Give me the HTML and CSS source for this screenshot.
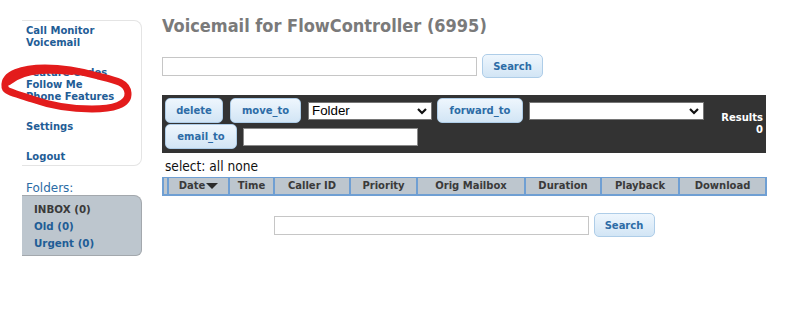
FILE: index.html
```html
<!DOCTYPE html>
<html>
<head>
<meta charset="utf-8">
<link rel="stylesheet" href="styles.css">
</head>
<body>
<div class="page">
  <aside class="sidebar">
    <nav class="menu">
      <div class="menu-group"><a class="menu-link">Call Monitor</a><a class="menu-link">Voicemail</a></div>
      <div class="menu-group"><a class="menu-link">Feature Codes</a><a class="menu-link">Follow Me</a><a class="menu-link">Phone Features</a></div>
      <div class="menu-group"><a class="menu-link">Settings</a></div>
      <div class="menu-group"><a class="menu-link">Logout</a></div>
    </nav>
    <div class="folders-label">Folders:</div>
    <div class="folders">
      <a class="folder current">INBOX (0)</a>
      <a class="folder">Old (0)</a>
      <a class="folder">Urgent (0)</a>
    </div>
  </aside>
  <main class="main">
    <h1 class="title">Voicemail for FlowController (6995)</h1>
    <div class="search-row">
      <input class="search-input" type="text"><button class="btn btn-search">Search</button>
    </div>
    <div class="toolbar">
      <div class="toolbar-controls">
        <div class="tb-row">
          <button class="btn btn-tb btn-delete">delete</button>
          <button class="btn btn-tb btn-move">move_to</button>
          <span class="select-wrap sel-folder">
            <select class="select"><option>Folder</option></select>
            <svg class="chev" width="10" height="7" viewBox="0 0 10 7"><polyline points="1,1 5,5 9,1" fill="none" stroke="#111" stroke-width="2.2"/></svg>
          </span>
          <button class="btn btn-tb btn-forward">forward_to</button>
          <span class="select-wrap sel-forward">
            <select class="select"><option></option></select>
            <svg class="chev" width="10" height="7" viewBox="0 0 10 7"><polyline points="1,1 5,5 9,1" fill="none" stroke="#111" stroke-width="2.2"/></svg>
          </span>
        </div>
        <div class="tb-row tb-row2">
          <button class="btn btn-tb btn-email">email_to</button>
          <input class="email-input" type="text">
        </div>
      </div>
      <div class="results">Results<br>0</div>
    </div>
    <div class="select-links">select: <a class="sel-link">all</a> <a class="sel-link">none</a></div>
    <table class="msg-table">
      <thead>
        <tr>
          <th class="c-check"></th>
          <th class="c-date">Date<svg class="sort" width="12" height="7" viewBox="0 0 12 7"><polygon points="0,0 12,0 6,6" fill="#2b2b2b"/></svg></th>
          <th class="c-time">Time</th>
          <th class="c-caller">Caller ID</th>
          <th class="c-prio">Priority</th>
          <th class="c-orig">Orig Mailbox</th>
          <th class="c-dur">Duration</th>
          <th class="c-play">Playback</th>
          <th class="c-down">Download</th>
        </tr>
      </thead>
    </table>
    <div class="search-row search-bottom">
      <input class="search-input" type="text"><button class="btn btn-search">Search</button>
    </div>
  </main>
  <svg class="scribble" width="140" height="120" viewBox="0 0 140 120">
    <path d="M 5 86 C 4 74, 22 68, 45 68 C 65 68, 80 71, 98 76 C 115 80, 127 82, 128 93 C 129 105, 112 109, 92 109 C 66 109, 46 104, 32 99 C 18 94, 4 92, 5 86" fill="none" stroke="#e31c1c" stroke-width="7" stroke-linecap="round" stroke-linejoin="round"/>
    <path d="M 9 82 C 16 76, 28 72, 40 71 C 52 70, 62 71, 72 72" fill="none" stroke="#e31c1c" stroke-width="6" stroke-linecap="round"/>
  </svg>
</div>
</body>
</html>
```

FILE: styles.css
```css
html, body {
  margin: 0;
  padding: 0;
  background: #ffffff;
}
.page {
  position: relative;
  display: flex;
  align-items: flex-start;
  font-family: "DejaVu Sans", Verdana, sans-serif;
}
.sidebar {
  margin-left: 22px;
  width: 120px;
  flex: none;
}
.menu {
  margin-top: 20px;
  border: 1px solid #e4e4e4;
  border-left: none;
  border-radius: 0 8px 8px 0;
  padding: 4px 0 2px 4px;
}
.menu-group {
  display: flex;
  flex-direction: column;
  margin-bottom: 18px;
}
.menu-group:last-child {
  margin-bottom: 0;
}
.menu-link {
  font-size: 10px;
  font-weight: bold;
  line-height: 12px;
  color: #1f5d96;
  white-space: nowrap;
}
.folders-label {
  margin-top: 15px;
  font-size: 12px;
  line-height: 14px;
  color: #2b6ca5;
  padding-left: 4px;
}
.folders {
  background: #bdc6ce;
  border: 1px solid #a3a8ad;
  border-left: none;
  border-radius: 0 8px 6px 0;
  padding: 5px 0 3px 12px;
  display: flex;
  flex-direction: column;
}
.folder {
  font-size: 10.3px;
  font-weight: bold;
  line-height: 17px;
  color: #1f5d96;
}
.folder.current {
  color: #3a3a3a;
}
.main {
  margin-left: 20px;
  width: 604px;
  flex: none;
  padding-top: 15px;
}
.title {
  margin: 0;
  font-family: "DejaVu Sans Condensed", "DejaVu Sans", sans-serif;
  font-stretch: condensed;
  font-size: 18px;
  line-height: 21px;
  font-weight: bold;
  color: #7a7a7a;
  white-space: nowrap;
}
.search-row {
  margin-top: 18px;
  display: flex;
  align-items: center;
  gap: 5px;
  height: 24px;
}
.search-bottom {
  margin-top: 17px;
  justify-content: center;
}
.search-input {
  box-sizing: border-box;
  width: 315px;
  height: 19px;
  border: 1px solid #c6c6c6;
  background: #fff;
  margin: 0;
  padding: 0 2px;
}
.btn {
  box-sizing: border-box;
  margin: 0;
  padding: 0 11px;
  border: 1px solid #aecde8;
  border-radius: 5px;
  background: linear-gradient(#eef6fd, #d2e5f5);
  color: #2d6ca6;
  font-family: "DejaVu Sans", Verdana, sans-serif;
  font-size: 10px;
  font-weight: bold;
  white-space: nowrap;
}
.btn-search {
  height: 24px;
  width: 61px;
  padding: 0;
}
.toolbar {
  margin-top: 17px;
  background: #333333;
  display: flex;
  align-items: center;
  padding: 3px 3px 4px 3px;
}
.toolbar-controls {
  display: flex;
  flex-direction: column;
  gap: 1px;
}
.tb-row {
  display: flex;
  align-items: center;
}
.btn-tb {
  height: 25px;
  padding: 0;
}
.btn-delete { width: 58px; margin-right: 7px; }
.btn-move { width: 71px; margin-right: 7px; }
.btn-forward { width: 86px; margin-right: 6px; }
.btn-email { width: 72px; margin-right: 6px; }
.select-wrap {
  position: relative;
  display: inline-flex;
}
.sel-folder { width: 124px; margin-right: 5px; }
.sel-forward { width: 175px; }
.select {
  appearance: none;
  -webkit-appearance: none;
  box-sizing: border-box;
  width: 100%;
  height: 18px;
  margin: 0;
  border: 1px solid #767676;
  border-radius: 0;
  background: #fff;
  color: #000;
  font-family: "Liberation Sans", Arial, sans-serif;
  font-size: 13.33px;
  line-height: 16px;
  padding: 0 3px;
}
.chev {
  position: absolute;
  right: 5px;
  top: 6px;
}
.email-input {
  box-sizing: border-box;
  width: 175px;
  height: 18px;
  margin: 0;
  border: 1px solid #8a8a8a;
  background: #fff;
}
.results {
  margin-left: auto;
  text-align: right;
  color: #ffffff;
  font-size: 10px;
  font-weight: bold;
  line-height: 12px;
}
.select-links {
  margin-top: 6px;
  padding-left: 3px;
  font-family: "DejaVu Sans Condensed", "DejaVu Sans", sans-serif;
  font-stretch: condensed;
  font-size: 13.6px;
  line-height: 15px;
  color: #111;
}
.sel-link {
  color: #111;
}
.msg-table {
  margin-top: 3px;
  width: 604px;
  border-collapse: separate;
  border-spacing: 0;
  border: 1px solid #6f9fd3;
  border-top-width: 0;
  table-layout: fixed;
}
.msg-table th {
  background: #bdc6ce;
  border: 1px solid #6f9fd3;
  height: 16px;
  padding: 0;
  font-size: 10px;
  line-height: 16px;
  font-weight: bold;
  color: #3a3a3a;
  text-align: center;
  white-space: nowrap;
}
.c-check { width: 3px; }
.c-date { width: 59px; }
.c-time { width: 43px; }
.c-caller { width: 74px; }
.c-prio { width: 65px; }
.c-orig { width: 106px; }
.c-dur { width: 74px; }
.c-play { width: 76px; }
.c-down { width: 85px; }
.sort {
  vertical-align: -1px;
  margin-left: 1px;
}
.scribble {
  position: absolute;
  left: 0;
  top: 0;
  pointer-events: none;
}
```
